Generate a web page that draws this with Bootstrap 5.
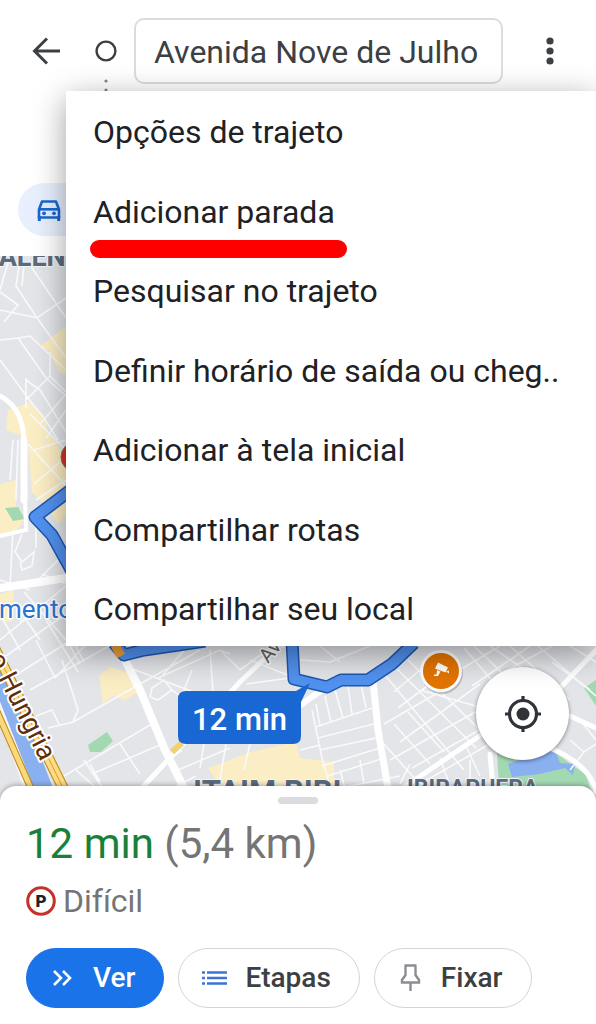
<!DOCTYPE html>
<html lang="pt-BR">
<head>
<meta charset="utf-8">
<meta name="viewport" content="width=device-width, initial-scale=1">
<title>Rota - Avenida Nove de Julho</title>
<link href="https://cdn.jsdelivr.net/npm/bootstrap@5.3.0/dist/css/bootstrap.min.css" rel="stylesheet">
<style>
  body { font-family: Roboto, "Liberation Sans", sans-serif; color: #202124; overflow-x: hidden; }
  .topbar { padding: 18px 20px 0 26px; }
  .icon-btn { width: 40px; height: 64px; color: #3c4043; }
  .origin-col { width: 44px; margin-left: 24px; }
  .origin-input { height: 66px; font-size: 32px; color: #3c4043; border: 2px solid #dadce0; border-radius: 10px; padding: 2px 18px 0; width: 369px; }
  .dots-row { padding-left: 102px; height: 16px; }
  .modes { padding: 83px 18px 20px; }
  .mode-chip { width: 140px; height: 53px; background: #e8f0fe; color: #1967d2; border-radius: 27px; padding-left: 18px; }
  .route-menu { position: absolute; top: 91px; left: 66px; right: 0; min-height: 555px; padding: 21px 27px 17px; background: #fff; box-shadow: 0 8px 30px rgba(0,0,0,.38); z-index: 5; }
  .menu-entry { font-size: 32px; line-height: 40px; color: #202124; }
  .marked { position: relative; }
  .marked::after { content: ""; position: absolute; left: -3px; right: -12px; bottom: -26px; height: 18px; border-radius: 9px; background: #f00; }
  .locate-btn { position: absolute; right: 27px; bottom: 40px; width: 93px; height: 93px; background: #fff; color: #303338; box-shadow: 0 1px 4px rgba(0,0,0,.45); }
  .sheet { position: relative; margin-top: -14px; background: #fff; border-radius: 16px 16px 0 0; padding: 11px 26px 16px; box-shadow: 0 -1px 5px rgba(0,0,0,.3); }
  .grabber { width: 40px; height: 7px; border-radius: 4px; background: #dadce0; }
  .eta { font-size: 42px; line-height: 48px; margin: 16px 0 0; font-weight: 400; color: #757575; }
  .eta-time { color: #188038; }
  .parking { font-size: 32px; line-height: 40px; margin-top: 13px; gap: 7px; color: #757575; }
  .actions { gap: 14px; margin-top: 27px; }
  .pill { height: 60px; border-radius: 30px; border: 1px solid #d3d5d9; background: #fff; font-size: 28px; font-weight: 500; color: #3c4043; padding: 0 28px 0 22px; gap: 16px; }
  .pill-go { background: #1a73e8; border-color: #1a73e8; color: #fff; }
</style>
</head>
<body class="bg-white">
<div class="min-vh-100 d-flex flex-column position-relative">

  <header>
    <div class="topbar d-flex align-items-center">
      <button class="btn p-0 border-0 icon-btn" aria-label="Voltar">
        <svg width="40" height="40" viewBox="0 0 40 40" fill="none" stroke="currentColor" stroke-width="3"><path d="M34 20H9M21 7.500 8.500 20 21 32.500"/></svg>
      </button>
      <div class="origin-col flex-shrink-0">
        <svg width="32" height="32" viewBox="0 0 32 32" fill="none" stroke="#3c4043" stroke-width="2.400"><circle cx="16" cy="16" r="9.400"/></svg>
      </div>
      <input class="origin-input flex-shrink-1" type="text" aria-label="Ponto de partida" value="Avenida Nove de Julho">
      <button class="btn p-0 border-0 icon-btn ms-auto" aria-label="Mais opções">
        <svg width="40" height="40" viewBox="0 0 40 40" fill="currentColor"><circle cx="14" cy="10" r="3.600"/><circle cx="14" cy="20" r="3.600"/><circle cx="14" cy="30" r="3.600"/></svg>
      </button>
    </div>
    <div class="dots-row">
      <svg class="d-block overflow-visible" width="8" height="16" viewBox="0 0 8 16" fill="#80868b"><circle cx="4" cy="-3" r="1.600"/><circle cx="4" cy="6" r="1.600"/></svg>
    </div>
    <div class="modes">
      <button class="btn border-0 mode-chip d-flex align-items-center" aria-label="Carro">
        <svg width="26" height="26" viewBox="0 0 26 26" fill="none" stroke="currentColor" stroke-width="2.600"><path d="M3 12.500 6 4.500H20L23 12.500V20.500H3Z" stroke-linejoin="round"/><path d="M3 12.300H23"/><path d="M3.300 19v5M22.700 19v5" stroke-width="3"/><circle cx="8" cy="16.300" r="1.900" fill="currentColor" stroke="none"/><circle cx="18" cy="16.300" r="1.900" fill="currentColor" stroke="none"/></svg>
      </button>
    </div>
  </header>

  <main class="position-relative">
    <svg class="d-block w-100" viewBox="0 256 596 544" role="img" aria-label="Mapa da rota">
      <rect y="256" width="596" height="544" fill="#e3e5e9"/>
      <!-- commercial blocks -->
      <g fill="#fbedc4">
        <path d="M40 346 66 326V376L58 370 50 352Z"/>
        <path d="M8 410 30 402 44 416 48 432 56 440 60 460H36L28 438 6 430Z"/>
        <path d="M28 440 60 446 66 470V515L58 524 48 508 32 492Z"/>
        <path d="M0 484 16 480V508L24 520 16 532 0 538Z"/>
        <path d="M0 594 14 590 12 622 0 620Z"/>
        <path d="M99 675 111 667 134 675 142 690 125 700 113 696 103 704Z"/>
        <path d="M208 768 250 752 296 742 300 758 334 762V800H230Z"/>
      </g>
      <g fill="#a3d9b1">
        <path d="M5 508 18 507 25 519 13 521Z"/>
        <path d="M88 745 107 732 113 741 101 752 90 752Z"/>
        <path d="M584 688 596 680V706Z"/>
        <path d="M497 753H556L586 775 594 800H500Z"/>
      </g>
      <path d="M508 764 530 756 555 750 560 763 575 764 573 775 565 768 540 774 512 777Z" fill="#8ab0f0"/>
      <!-- minor streets -->
      <g fill="none" stroke="#fafafb" stroke-width="1.600">
        <path d="M10 256 0 290M20 260 16 286 37 318 66 298M0 310 38 318M24 264 22 286M0 292 18 305 4 322M28 262 66 318M37 318 66 358M0 340 18 338 30 336 66 370M18 338 46 378 66 396M0 360 28 398 44 418 58 440M26 378V408M26 380 40 390 66 432M50 352 50 376 66 392M50 376 26 400M66 394 40 424M66 410 46 438M30 414 66 450"/>
        <path d="M13 440 10 480M18 440 16 500M28 444 66 486M34 450 66 440M34 484 60 462M36 500 66 480M13 530 10 586M22 534 15 552 22 562 34 552 32 566 22 570 20 562M36 524 36 548M38 580 66 552M42 574 66 584M0 580 30 590"/>
        <path d="M0 640 66 586M14 602 40 640M24 592 66 640M0 614 20 650M44 604 20 622M0 660 80 604M8 680 100 622M30 690 120 640M46 620 78 672M70 646 80 664M76 646 84 662M36 640 55 678M62 660 78 710 73 722 48 728M36 716 52 710 60 726M55 678 90 640M73 722 200 650M64 776 150 725M76 770 94 786M60 778 80 800M84 760 104 790M90 764 100 782M120 744 140 774M92 774 160 745M138 654 170 640M158 678 220 650 230 654M130 668 204 696M150 697 152 688 164 680 172 690 158 700 150 697M172 690 186 700M210 650 213 692M220 650 240 670M240 670 270 648M250 660 300 680M246 684 290 678M186 648 162 676M180 700 192 670M168 760 182 750M204 744 200 768M226 744 220 780M250 744 244 770M178 770 230 748M150 800 196 776"/>
        <path d="M316 704 320 726M325 696 331 722M335 690 343 718M348 686 352 714M361 684 366 708M312 710 322 758 330 786M316 727 372 708M318 738 374 724M320 750 376 738M300 750 320 745M322 766 380 748M328 776 384 758M340 770 346 792M360 760 364 784M330 790 400 776"/>
        <path d="M384 674 464 770M396 668 476 748M408 660 480 730M420 690 490 710M394 692 420 670M398 708 446 672M384 724 460 680M400 742 480 684M390 760 486 706M412 768 490 724M420 784 500 738M384 744 416 780M394 724 430 764M408 712 444 752M420 778 426 796M410 764 400 784M440 758 450 786M466 746 480 776"/>
        <path d="M464 648 500 690M474 646 520 690M490 646 540 680M510 646 570 700M538 646 596 696M460 670 500 646M472 686 530 646M500 674 552 646M556 690 596 652M320 646 340 662M330 662 370 646M300 660 330 662M570 646 596 662M552 662 590 690M580 720 596 740M570 740 584 752 596 744M584 752 570 770M470 760 470 800"/>
      </g>
      <!-- avenues -->
      <g fill="none" stroke="#fff" stroke-linecap="round">
        <path d="M0 396C16 404 24 420 24 444" stroke-width="5"/>
        <path d="M23 430 26 530 0 536" stroke-width="4"/>
        <path d="M24 440V500" stroke-width="7"/>
        <path d="M0 588 66 578" stroke-width="8"/>
        <path d="M124 658 140 690 165 750 190 800" stroke-width="8"/>
        <path d="M140 790 168 760 240 682 284 640" stroke-width="5"/>
        <path d="M373 680 378 730 390 800" stroke-width="7"/>
        <path d="M296 708 322 690" stroke-width="6"/>
        <path d="M400 790 500 722M490 754 494 800" stroke-width="5"/>
        <path d="M560 688 600 646M570 716 596 728M550 748C574 758 592 772 596 792" stroke-width="5"/>
      </g>
      <!-- river and riverside roads -->
      <path d="M-10 674 34 800" stroke="#f5f5f5" stroke-width="12"/>
      <path d="M-8 656 48 800" stroke="#8ab0f0" stroke-width="18"/>
      <path d="M-8 700 36 800" stroke="#b98519" stroke-width="7"/>
      <path d="M-8 700 36 800" stroke="#fbd879" stroke-width="5"/>
      <path d="M-8 643 66 794" stroke="#b98519" stroke-width="11"/>
      <path d="M-8 643 66 794" stroke="#fcdb82" stroke-width="9"/>
      <path d="M-8 643 66 794" stroke="#d99e2b" stroke-width="1"/>
      <path d="M172 752 182 743" stroke="#f1cf73" stroke-width="6"/>
      <!-- route -->
      <g fill="none" stroke-linejoin="round">
        <path d="M76 486 35 517 52 535 74 575M114 643 124 655 144 650 205 641M292 640 294 679 327 687 341 680H368L392 664 414 643" stroke="#1d58b0" stroke-width="13"/>
        <path d="M76 486 35 517 52 535 74 575M114 643 124 655 144 650 205 641M292 640 294 679 327 687 341 680H368L392 664 414 643" stroke="#5291ef" stroke-width="10"/>
        <path d="M115 645 121 656" stroke="#f0a137" stroke-width="9"/>
      </g>
      <circle cx="76" cy="457" r="15" fill="#d93025" stroke="#777" stroke-width="1"/>
      <!-- place labels -->
      <g font-family="Roboto, sans-serif" stroke-linejoin="round" paint-order="stroke">
        <g fill="#5b6b7d" stroke="#f3f4f6" stroke-width="2" font-weight="700">
          <text x="-18" y="266" font-size="27">VALEN</text>
          <text x="193" y="802" font-size="31">ITAIM BIBI</text>
          <text x="407" y="796" font-size="23">IBIRAPUERA</text>
        </g>
        <text x="-1" y="618" font-size="26" fill="#2b73d3" stroke="#fff" stroke-width="3">mento</text>
        <text transform="translate(-12 658) rotate(63)" font-size="27" fill="#5f2d0c" stroke="#fff" stroke-width="4">o Hungria</text>
        <text transform="translate(268 664) rotate(-50)" font-size="20" fill="#5f6368" stroke="#fff" stroke-width="3">Av.</text>
      </g>
      <!-- camera marker -->
      <circle cx="442" cy="673" r="21" fill="#777" opacity=".4"/>
      <circle cx="441" cy="671" r="21" fill="#fff"/>
      <circle cx="441" cy="671" r="18" fill="#e37400"/>
      <g fill="#fff"><path d="M438 662.500 448 667.500 445.500 672.500 435 668.500Z"/><path d="M437 670 440.500 671.500 438 676H434V674.500H436.500Z"/><path d="M446 671.500 449 670.500 449 673.500Z"/></g>
      <!-- duration callout -->
      <path d="M186 691H296L310 683 301 702V736Q301 744 293 744H186Q178 744 178 736V699Q178 691 186 691Z" fill="#1967d2"/>
      <text x="192" y="730" font-family="Roboto, sans-serif" font-size="31" font-weight="500" fill="#fff">12 min</text>
    </svg>
    <button class="btn border-0 rounded-circle locate-btn d-flex align-items-center justify-content-center p-0" aria-label="Minha localização">
      <svg width="38" height="38" viewBox="0 0 38 38" fill="none" stroke="currentColor" stroke-width="3.200"><circle cx="19" cy="19" r="13.500"/><circle cx="19" cy="19" r="6.500" fill="currentColor" stroke="none"/><path d="M19 1v6M19 31v6M1 19h6M31 19h6"/></svg>
    </button>
  </main>

  <section class="sheet flex-grow-1">
    <div class="grabber mx-auto"></div>
    <h1 class="eta"><span class="eta-time">12 min</span> (5,4 km)</h1>
    <div class="parking d-flex align-items-center">
      <svg width="30" height="30" viewBox="0 0 30 30"><circle cx="15" cy="15" r="13.300" fill="#fff" stroke="#c5322a" stroke-width="3"/><text x="15" y="21" text-anchor="middle" font-family="Roboto, sans-serif" font-weight="900" font-size="17" fill="#202124">P</text></svg>
      <span>Difícil</span>
    </div>
    <div class="actions d-flex">
      <button class="btn pill pill-go d-flex align-items-center">
        <svg width="28" height="28" viewBox="0 0 28 28" fill="none" stroke="currentColor" stroke-width="2.600"><path d="M5 7 12 14 5 21M14 7 21 14 14 21"/></svg>Ver
      </button>
      <button class="btn pill d-flex align-items-center">
        <svg width="28" height="28" viewBox="0 0 28 28" fill="none" stroke="#3c74d6" stroke-width="2.600"><path d="M6 8.500H26M6 14H26M6 19.500H26M1 8.500H4M1 14H4M1 19.500H4"/></svg>Etapas
      </button>
      <button class="btn pill d-flex align-items-center">
        <svg width="28" height="28" viewBox="0 0 28 28" fill="none" stroke="#8b8e92" stroke-width="2.400"><path d="M7.500 1.500H19.500M8.500 2V11L5 16V18.500H22V16L18.500 11V2M13.500 18.500V27"/></svg>Fixar
      </button>
    </div>
  </section>

  <nav class="route-menu d-flex flex-column justify-content-between align-items-start" aria-label="Opções da rota">
    <button class="btn p-0 border-0 menu-entry">Opções de trajeto</button>
    <button class="btn p-0 border-0 menu-entry marked">Adicionar parada</button>
    <button class="btn p-0 border-0 menu-entry">Pesquisar no trajeto</button>
    <button class="btn p-0 border-0 menu-entry">Definir horário de saída ou cheg..</button>
    <button class="btn p-0 border-0 menu-entry">Adicionar à tela inicial</button>
    <button class="btn p-0 border-0 menu-entry">Compartilhar rotas</button>
    <button class="btn p-0 border-0 menu-entry">Compartilhar seu local</button>
  </nav>
</div>
<script src="https://cdn.jsdelivr.net/npm/bootstrap@5.3.0/dist/js/bootstrap.bundle.min.js"></script>
</body>
</html>
